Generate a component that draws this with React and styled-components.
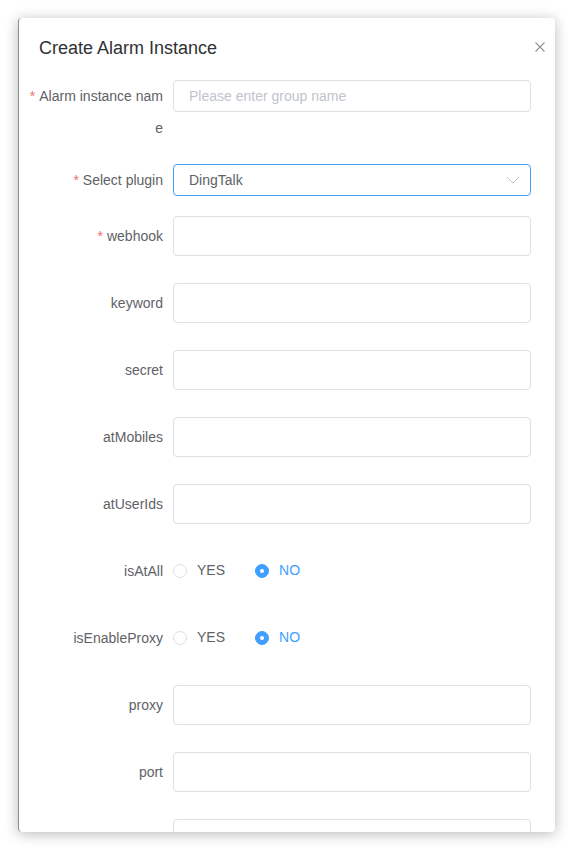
import React from 'react';
import styled, {createGlobalStyle} from 'styled-components';

const GlobalStyle = createGlobalStyle`
html, body {
margin: 0;
padding: 0;
background: #fff;
font-family: "Liberation Sans", Arial, sans-serif;
}
`;

const Page = styled.div`
padding: 18px;
`;

const Dialog = styled.div`
width: 537px;
height: 814px;
box-sizing: border-box;
background: #fff;
border-radius: 4px;
border-left: 1px solid #8c8c8c;
box-shadow: 0 2px 14px rgba(0, 0, 0, 0.28);
overflow: hidden;
`;

const Header = styled.div`
display: flex;
align-items: center;
justify-content: space-between;
padding: 17px 9px 0 20px;
`;

const Title = styled.span`
font-size: 18px;
line-height: 26px;
color: #303133;
`;

const CloseButton = styled.button`
border: none;
background: none;
padding: 0;
margin-top: -2px;
display: flex;
cursor: pointer;
`;

const Form = styled.div`
padding: 19px 24px 0 8px;
`;

const Row = styled.div`
display: flex;
align-items: flex-start;
margin-bottom: ${p => p.gap}px;
`;

const Label = styled.label`
width: 146px;
flex-shrink: 0;
box-sizing: border-box;
padding-right: 10px;
text-align: right;
font-size: 14px;
line-height: ${p => p.h}px;
color: #606266;
word-break: break-all;
`;

const Star = styled.span`
color: #f56c6c;
margin-right: 4px;
`;

const Input = styled.input`
flex: 1;
box-sizing: border-box;
height: ${p => p.h}px;
border: 1px solid ${p => (p.active ? '#409eff' : '#dcdfe6')};
border-radius: 4px;
padding: 0 15px;
font-family: inherit;
font-size: 14px;
color: #606266;
outline: none;
background: #fff;

&::placeholder {
color: #c0c4cc;
}
`;

const SelectBox = styled.div`
flex: 1;
position: relative;
display: flex;
`;

const Arrow = styled.svg`
position: absolute;
right: 11px;
top: 12px;
pointer-events: none;
`;

const RadioGroup = styled.div`
display: flex;
align-items: center;
height: 40px;
`;

const RadioItem = styled.label`
display: flex;
align-items: center;
margin-right: 30px;
font-size: 14px;
color: ${p => (p.checked ? '#409eff' : '#606266')};
cursor: pointer;
`;

const RadioDot = styled.span`
width: 14px;
height: 14px;
box-sizing: border-box;
border-radius: 50%;
border: 1px solid ${p => (p.checked ? '#409eff' : '#dcdfe6')};
background: ${p => (p.checked ? '#409eff' : '#fff')};
margin-right: 10px;
display: flex;
align-items: center;
justify-content: center;

&::after {
content: '';
width: 4px;
height: 4px;
border-radius: 50%;
background: #fff;
display: ${p => (p.checked ? 'block' : 'none')};
}
`;

const RadioText = styled.span`
line-height: 1;
margin-top: -3px;
`;

const textFields = ['keyword', 'secret', 'atMobiles', 'atUserIds'];
const proxyFields = ['proxy', 'port'];

const YesNo = ({value}) => (
    <RadioGroup>
        <RadioItem checked={value === 'yes'}>
            <RadioDot checked={value === 'yes'}/>
            <RadioText>YES</RadioText>
        </RadioItem>
        <RadioItem checked={value === 'no'}>
            <RadioDot checked={value === 'no'}/>
            <RadioText>NO</RadioText>
        </RadioItem>
    </RadioGroup>
);

const App = () => {
    return (
        <Page>
            <GlobalStyle/>
            <Dialog>
                <Header>
                    <Title>Create Alarm Instance</Title>
                    <CloseButton aria-label="close">
                        <svg width="12" height="12" viewBox="0 0 12 12">
                            <path d="M1.5 1.5 L10.5 10.5 M10.5 1.5 L1.5 10.5" stroke="#909399" strokeWidth="1.1" fill="none"/>
                        </svg>
                    </CloseButton>
                </Header>
                <Form>
                    <Row gap={20}>
                        <Label h={32}><Star>*</Star>Alarm instance name</Label>
                        <Input h={32} placeholder="Please enter group name"/>
                    </Row>
                    <Row gap={20}>
                        <Label h={32}><Star>*</Star>Select plugin</Label>
                        <SelectBox>
                            <Input h={32} active readOnly value="DingTalk"/>
                            <Arrow width="14" height="8" viewBox="0 0 14 8">
                                <path d="M1 1 L7 7 L13 1" stroke="#c0c4cc" strokeWidth="1" fill="none"/>
                            </Arrow>
                        </SelectBox>
                    </Row>
                    <Row gap={27}>
                        <Label h={40}><Star>*</Star>webhook</Label>
                        <Input h={40}/>
                    </Row>
                    {textFields.map(name => (
                        <Row gap={27} key={name}>
                            <Label h={40}>{name}</Label>
                            <Input h={40}/>
                        </Row>
                    ))}
                    <Row gap={27}>
                        <Label h={40}>isAtAll</Label>
                        <YesNo value="no"/>
                    </Row>
                    <Row gap={27}>
                        <Label h={40}>isEnableProxy</Label>
                        <YesNo value="no"/>
                    </Row>
                    {proxyFields.map(name => (
                        <Row gap={27} key={name}>
                            <Label h={40}>{name}</Label>
                            <Input h={40}/>
                        </Row>
                    ))}
                    <Row gap={27}>
                        <Label h={40}/>
                        <Input h={40}/>
                    </Row>
                </Form>
            </Dialog>
        </Page>
    );
};

export default App;
